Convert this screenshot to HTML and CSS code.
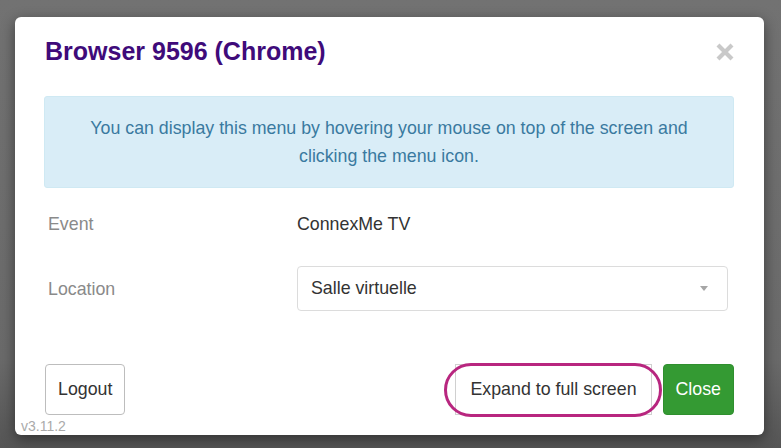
FILE: index.html
```html
<!DOCTYPE html>
<html lang="en">
<head>
<meta charset="utf-8">
<title>Browser 9596 (Chrome)</title>
<link rel="stylesheet" href="styles.css">
</head>
<body>
<div class="backdrop">
  <div class="modal">
    <div class="modal-header">
      <h4 class="modal-title">Browser 9596 (Chrome)</h4>
      <button class="close-x" type="button" aria-label="Close">
        <svg width="20" height="20" viewBox="0 0 20 20"><path d="M3 3 L17 17 M17 3 L3 17" stroke="#c9c9c9" stroke-width="4.2" stroke-linecap="butt"/></svg>
      </button>
    </div>
    <div class="modal-body">
      <div class="alert">You can display this menu by hovering your mouse on top of the screen and clicking the menu icon.</div>
      <div class="form">
        <div class="form-row">
          <div class="label">Event</div>
          <div class="value">ConnexMe TV</div>
        </div>
        <div class="form-row">
          <div class="label">Location</div>
          <div class="select">
            <span>Salle virtuelle</span>
            <span class="caret"></span>
          </div>
        </div>
      </div>
    </div>
    <div class="modal-footer">
      <button class="btn btn-default" type="button">Logout</button>
      <div class="right-buttons">
        <div class="highlight">
          <button class="btn btn-default btn-expand" type="button">Expand to full screen</button>
        </div>
        <button class="btn btn-success" type="button">Close</button>
      </div>
    </div>
    <div class="version">v3.11.2</div>
  </div>
</div>
</body>
</html>
```

FILE: styles.css
```css
* { box-sizing: border-box; }
html, body { margin: 0; padding: 0; }
body {
  width: 781px;
  height: 448px;
  overflow: hidden;
  font-family: "Liberation Sans", Arial, sans-serif;
  background: linear-gradient(to bottom, #727272 0%, #6a6a6a 80%, #555555 100%);
}
.backdrop {
  padding: 17px 17px 0 15px;
}
.modal {
  width: 749px;
  height: 418px;
  background: #ffffff;
  border-radius: 6px;
  box-shadow: 0 4px 14px rgba(0, 0, 0, 0.45);
  display: flex;
  flex-direction: column;
}
.modal-header {
  display: flex;
  justify-content: space-between;
  align-items: flex-start;
  padding: 20px 29px 0 30px;
}
.modal-title {
  margin: 0;
  font-size: 25px;
  line-height: 28px;
  font-weight: bold;
  color: #3f0b7a;
}
.close-x {
  border: 0;
  background: none;
  padding: 0;
  margin-top: 5px;
  width: 20px;
  height: 20px;
  display: block;
}
.close-x svg { display: block; }
.modal-body {
  padding: 31px 30px 0 29px;
}
.alert {
  background: #d9edf7;
  border: 1px solid #cfe9f3;
  border-radius: 3px;
  color: #3a7aa0;
  text-align: center;
  font-size: 17.8px;
  line-height: 28px;
  padding: 17px 20px;
  height: 92px;
}
.form {
  padding-top: 25px;
}
.form-row {
  display: grid;
  grid-template-columns: 253px 431px;
  align-items: center;
}
.form-row + .form-row {
  margin-top: 31px;
}
.label {
  color: #8a8a8a;
  font-size: 17.8px;
  line-height: 22px;
  padding-left: 4px;
}
.value {
  color: #333333;
  font-size: 17.8px;
  line-height: 22px;
}
.select {
  height: 45px;
  border: 1px solid #dcdcdc;
  border-radius: 4px;
  display: flex;
  align-items: center;
  justify-content: space-between;
  padding: 0 19px 0 13px;
  color: #333333;
  font-size: 17.8px;
}
.caret {
  width: 0;
  height: 0;
  border-left: 4px solid transparent;
  border-right: 4px solid transparent;
  border-top: 5px solid #a6a6a6;
}
.modal-footer {
  display: flex;
  justify-content: space-between;
  align-items: center;
  padding: 53px 30px 0 30px;
}
.right-buttons {
  display: flex;
  align-items: center;
  gap: 11px;
}
.btn {
  height: 51px;
  font-family: "Liberation Sans", Arial, sans-serif;
  font-size: 17.8px;
  border-radius: 4px;
  cursor: pointer;
}
.btn-default {
  background: #ffffff;
  color: #333333;
  border: 1px solid #bdbdbd;
  padding: 0 12px;
}
.btn-expand {
  border-radius: 0;
  border-color: #d0d0d0;
  padding: 0 14px;
}
.highlight {
  position: relative;
}
.highlight::before {
  content: "";
  position: absolute;
  left: -11px;
  right: -10px;
  top: -1px;
  bottom: -2px;
  border: 3.5px solid #b8267f;
  border-radius: 28px;
  pointer-events: none;
}
.btn-success {
  background: #349a33;
  color: #ffffff;
  border: 1px solid #2f8f2e;
  padding: 0 12px;
}
.version {
  margin-top: 3px;
  padding-left: 6px;
  color: #aaaaaa;
  font-size: 14px;
  line-height: 16px;
}
```
